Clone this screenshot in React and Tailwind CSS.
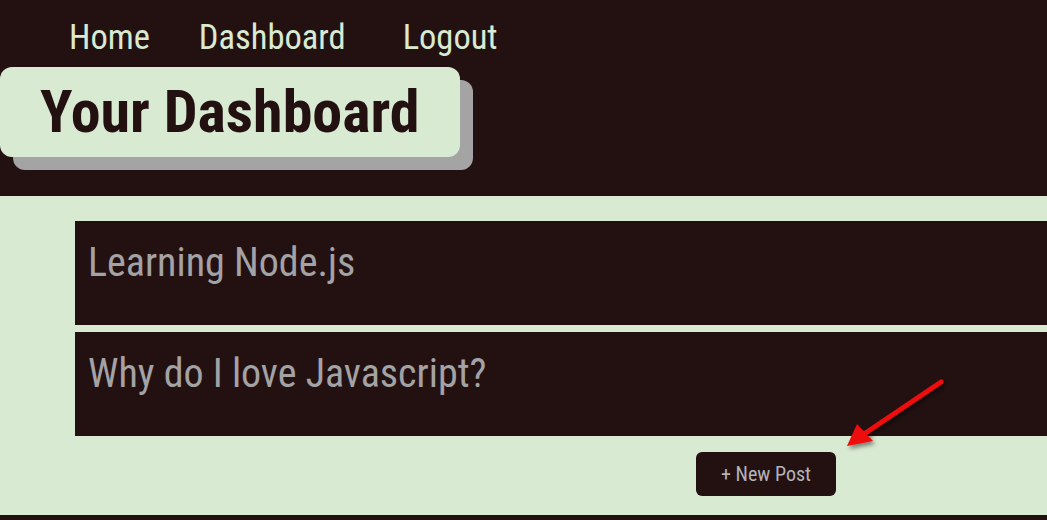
const DARK = "bg-[#231112]";

function Nav() {
  return (
    <nav className="flex items-center pl-[69px] pt-[12px] h-[62px] text-[34.5px] text-[#d9ead3] leading-none">
      <a className="mr-[49px]">Home</a>
      <a className="mr-[57px]">Dashboard</a>
      <a>Logout</a>
    </nav>
  );
}

function PostCard({ title }) {
  return (
    <div className={`${DARK} h-[104px] pl-[13px] pt-[22px]`}>
      <h2 className="text-[40px] leading-none text-[#a3a3a6]">{title}</h2>
    </div>
  );
}

function Arrow() {
  return (
    <svg className="absolute left-[830px] top-[370px]" width="130" height="95" viewBox="0 0 130 95">
      <defs>
        <filter id="sh" x="-20%" y="-20%" width="140%" height="140%">
          <feDropShadow dx="2" dy="3" stdDeviation="2" floodColor="#000" floodOpacity="0.45" />
        </filter>
      </defs>
      <g filter="url(#sh)">
        <line x1="111" y1="12" x2="34" y2="64" stroke="#ee0a0a" strokeWidth="5" strokeLinecap="round" />
        <polygon points="17,76 27,54 43,71" fill="#ee0a0a" />
      </g>
    </svg>
  );
}

export default function App() {
  return (
    <div className="relative w-[1047px] h-[520px] overflow-hidden font-['Roboto',sans-serif] font-stretch-condensed bg-[#d9ead3]">
      <header className={`${DARK} h-[196px]`}>
        <Nav />
        <div className="mt-[5px] inline-block rounded-[12px] bg-[#d9ead3] px-[40px] h-[90px] shadow-[13px_13px_0_#a4a4a4]">
          <h1 className="text-[60px] font-bold leading-[90px] text-[#231112]">Your Dashboard</h1>
        </div>
      </header>

      <main className="pl-[75px] pt-[25px] flex flex-col gap-[7px]">
        <PostCard title="Learning Node.js" />
        <PostCard title="Why do I love Javascript?" />
      </main>

      <div className="flex pl-[696px] pt-[16px]">
        <button className={`${DARK} w-[140px] h-[44px] rounded-[6px] text-[20px] text-[#b3b3b8]`}>
          + New Post
        </button>
      </div>

      <div className={`${DARK} absolute left-0 right-0 bottom-0 h-[5px]`} />
      <Arrow />
    </div>
  );
}
